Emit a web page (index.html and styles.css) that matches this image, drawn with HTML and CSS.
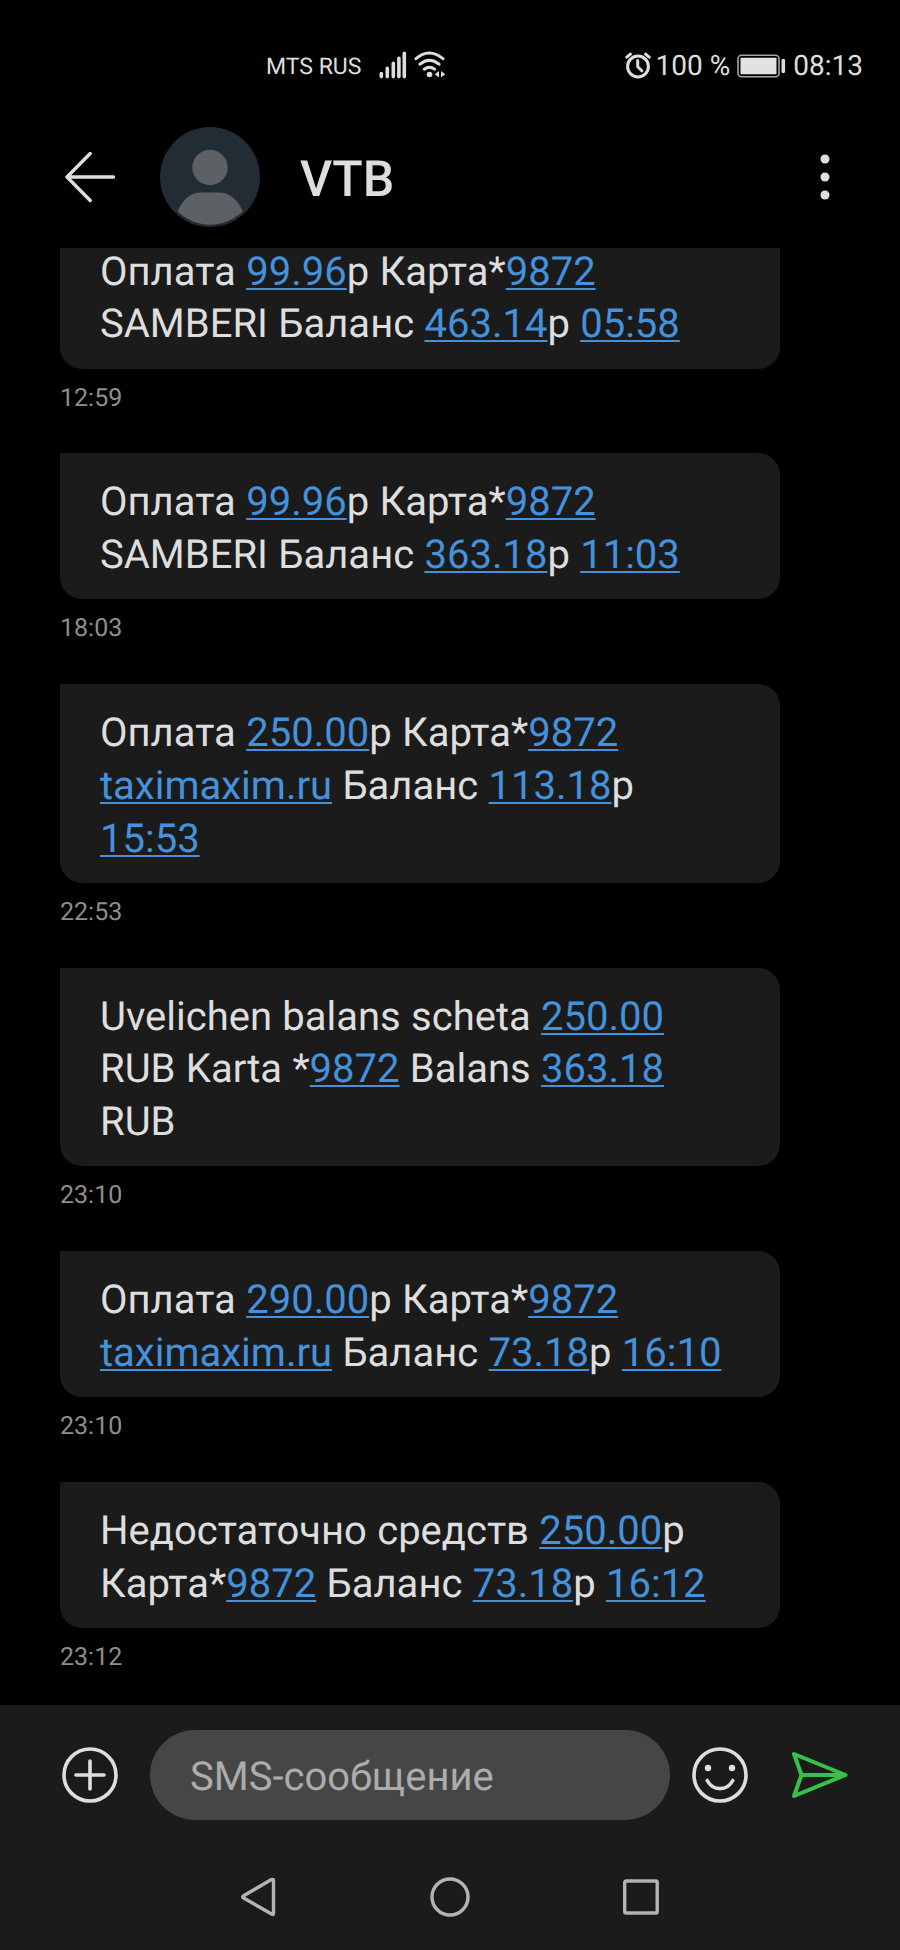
FILE: index.html
```html
<!DOCTYPE html>
<html lang="ru">
<head>
<meta charset="utf-8">
<title>VTB</title>
<link rel="stylesheet" href="styles.css">
</head>
<body>
<div class="phone">
  <div class="status">
    <div class="status-left">
      <span class="carrier">MTS RUS</span>
      <svg class="signal" width="29" height="28" viewBox="0 0 29 28"><path d="M2.3 22.6v3M8.3 17.4v8.2M14.3 12.2v13.4M19.9 7.2v18.4M25.3 2.2v23.4"/></svg>
      <svg class="wifi" width="32" height="28" viewBox="0 0 32 28"><path d="M2 7.7q13-11.4 27 0M6 13.2q9.400-8 19 0M10.300 18.200q5.200-4 10.200 0"/><circle cx="15.500" cy="23.500" r="2.800"/><path class="solid" d="M25 20v6.600l-4.300-3.300zM27 20v6.600l4.300-3.300z"/></svg>
    </div>
    <div class="status-right">
      <svg class="alarm" width="26" height="28" viewBox="0 0 26 28"><circle cx="13" cy="14.500" r="10.400"/><path d="M12.700 8.500v6.200l4.100 4.100M1.800 5.200l3.600-3M24.200 5.200l-3.600-3"/></svg>
      <span class="percent">100 %</span>
      <svg class="battery" width="49" height="24" viewBox="0 0 49 24"><rect class="case" x="1" y="1.200" width="41" height="21.500" rx="3.500"/><rect class="charge" x="3.500" y="3.700" width="36" height="16.600" rx=".8"/><path d="M46.300 6.500v11"/></svg>
      <span class="clock">08:13</span>
    </div>
  </div>

  <header class="header">
    <svg class="back" width="50" height="52" viewBox="0 0 50 52"><path d="M48.400 26H2M25.200 2.500L2 26l23.200 23.500"/></svg>
    <svg class="avatar" width="100" height="100" viewBox="0 0 100 100"><circle class="disc" cx="50" cy="50" r="50"/><g class="person"><circle cx="50" cy="40.500" r="17.700"/><path d="M17.600 84.600C22 73 30.500 65.500 41 65.500h18c10.500 0 19.500 7.500 23.700 19.100C73.500 93 62.500 97.800 50 97.800S26.800 93 17.600 84.600z"/></g></svg>
    <h1 class="title">VTB</h1>
    <svg class="more" width="10" height="46" viewBox="0 0 10 46"><circle cx="5" cy="5" r="4.500"/><circle cx="5" cy="23" r="4.500"/><circle cx="5" cy="41" r="4.500"/></svg>
  </header>

  <main class="messages">
    <div class="message"><p class="bubble">Оплата <a>99.96</a>р Карта*<a>9872</a><br>SAMBERI Баланс <a>463.14</a>р <a>05:58</a></p><time>12:59</time></div>
    <div class="message"><p class="bubble">Оплата <a>99.96</a>р Карта*<a>9872</a><br>SAMBERI Баланс <a>363.18</a>р <a>11:03</a></p><time>18:03</time></div>
    <div class="message"><p class="bubble">Оплата <a>250.00</a>р Карта*<a>9872</a><br><a>taximaxim.ru</a> Баланс <a>113.18</a>р<br><a>15:53</a></p><time>22:53</time></div>
    <div class="message"><p class="bubble">Uvelichen balans scheta <a>250.00</a><br>RUB Karta *<a>9872</a> Balans <a>363.18</a><br>RUB</p><time>23:10</time></div>
    <div class="message"><p class="bubble">Оплата <a>290.00</a>р Карта*<a>9872</a><br><a>taximaxim.ru</a> Баланс <a>73.18</a>р <a>16:10</a></p><time>23:10</time></div>
    <div class="message"><p class="bubble">Недостаточно средств <a>250.00</a>р<br>Карта*<a>9872</a> Баланс <a>73.18</a>р <a>16:12</a></p><time>23:12</time></div>
  </main>

  <footer class="footer">
    <div class="composer">
      <svg class="round" width="56" height="56" viewBox="0 0 56 56"><circle cx="28" cy="28" r="26"/><path d="M28 14v28M14 28h28"/></svg>
      <div class="field">SMS-сообщение</div>
      <svg class="round" width="56" height="56" viewBox="0 0 56 56"><circle cx="28" cy="28" r="26"/><path d="M15.200 33.500c5.800 10.800 19.800 10.800 25.600 0"/><circle class="eye" cx="16" cy="21" r="3.200"/><circle class="eye" cx="40" cy="21" r="3.200"/></svg>
      <svg class="send" width="58" height="50" viewBox="0 0 58 50"><path d="M3 4l51.500 21L3 46l7.500-21zM10.500 25h44"/></svg>
    </div>
    <nav class="nav">
      <svg width="36" height="40" viewBox="0 0 36 40"><path d="M32.500 2.500q1 0 1 1v33q0 1.500-1.500.7L3.600 21Q1.800 20 3.600 18.800L31 2.800q.7-.4 1.500-.3z"/></svg>
      <svg width="40" height="40" viewBox="0 0 40 40"><circle cx="20" cy="20" r="18"/></svg>
      <svg width="36" height="36" viewBox="0 0 36 36"><rect x="1.700" y="2" width="32.500" height="32" rx="1.500"/></svg>
    </nav>
  </footer>
</div>
</body>
</html>
```
FILE: styles.css
```css
* {
  box-sizing: border-box;
}

body {
  margin: 0;
  background: #000;
  color: #dedede;
  font-family: Roboto, "Noto Sans", sans-serif;
  text-rendering: geometricPrecision;
}

svg {
  display: block;
  flex: none;
  fill: none;
  stroke: #dedede;
  stroke-width: 3.6;
  stroke-linecap: round;
  stroke-linejoin: round;
}

.phone {
  display: flex;
  flex-direction: column;
  width: 900px;
  height: 1950px;
  overflow: hidden;
}

.status {
  display: flex;
  justify-content: space-between;
  align-items: center;
  height: 112px;
  padding: 21px 37px 0 266px;
  white-space: nowrap;
}

.status-left,
.status-right {
  display: flex;
  align-items: center;
}

.carrier {
  font-size: 23px;
  line-height: 28px;
}

.signal {
  margin: 0 0 4px 18px;
}

.wifi {
  margin: 0 0 4px 6px;
  stroke-width: 3;
}

.wifi circle,
.wifi .solid {
  fill: #dedede;
  stroke: none;
}

.alarm {
  margin-bottom: 1px;
  stroke-width: 3;
}

.percent,
.clock {
  font-size: 28px;
  line-height: 34px;
  margin-bottom: 1px;
}

.percent {
  margin-left: 5px;
}

.battery {
  margin: 0 7px 2px 7px;
}

.battery .case {
  stroke: #a5a5a5;
  stroke-width: 1.6;
}

.battery .charge {
  fill: #e2e2e2;
  stroke: none;
}

.header {
  display: flex;
  align-items: center;
  flex: none;
  height: 136px;
  padding: 0 70px 6px 65px;
}

.back {
  stroke-width: 3.4;
}

.avatar {
  margin-left: 45px;
  stroke: none;
}

.disc {
  fill: #222c35;
}

.person {
  fill: #5d6165;
}

.title {
  flex: 1;
  margin: 5px 0 0 40px;
  font-size: 50px;
  font-weight: 500;
  line-height: 60px;
}

.more {
  fill: #dedede;
  stroke: none;
}

.messages {
  display: flex;
  flex-direction: column;
  justify-content: flex-end;
  gap: 39.75px;
  height: 1457px;
  padding: 0 60px 32.1px;
  overflow: hidden;
}

.message {
  flex: none;
}

.bubble {
  width: 720px;
  margin: 0 0 13px;
  padding: 23px 40px 17.500px;
  border-radius: 0 22px 22px 22px;
  background: #1b1b1b;
  font-size: 40px;
  line-height: 52.750px;
  white-space: nowrap;
  word-spacing: 0.4px;
}

.bubble a {
  color: #4492dc;
  text-decoration: underline;
  text-decoration-thickness: 2px;
  text-decoration-skip-ink: none;
  text-underline-offset: 3px;
}

time {
  display: block;
  height: 32px;
  color: #8e8e8e;
  font-size: 25px;
  line-height: 33.5px;
}

.footer {
  flex: none;
  height: 245px;
  background: #1b1b1b;
}

.composer {
  display: flex;
  align-items: center;
  padding: 25px 50px 0 62px;
}

.field {
  width: 520px;
  height: 90px;
  margin: 0 22px 0 32px;
  padding-left: 40px;
  border-radius: 45px;
  background: #464646;
  color: #acacac;
  font-size: 40px;
  line-height: 93px;
}

.round .eye {
  fill: #dedede;
  stroke: none;
}

.send {
  margin-left: 43px;
  stroke: #35c247;
  stroke-width: 4;
}

.nav {
  display: flex;
  justify-content: space-between;
  align-items: center;
  height: 40px;
  margin-top: 57px;
  padding: 0 241px 0 240px;
}

.nav svg {
  stroke: #b4b4b4;
  stroke-width: 3.400;
}
```
